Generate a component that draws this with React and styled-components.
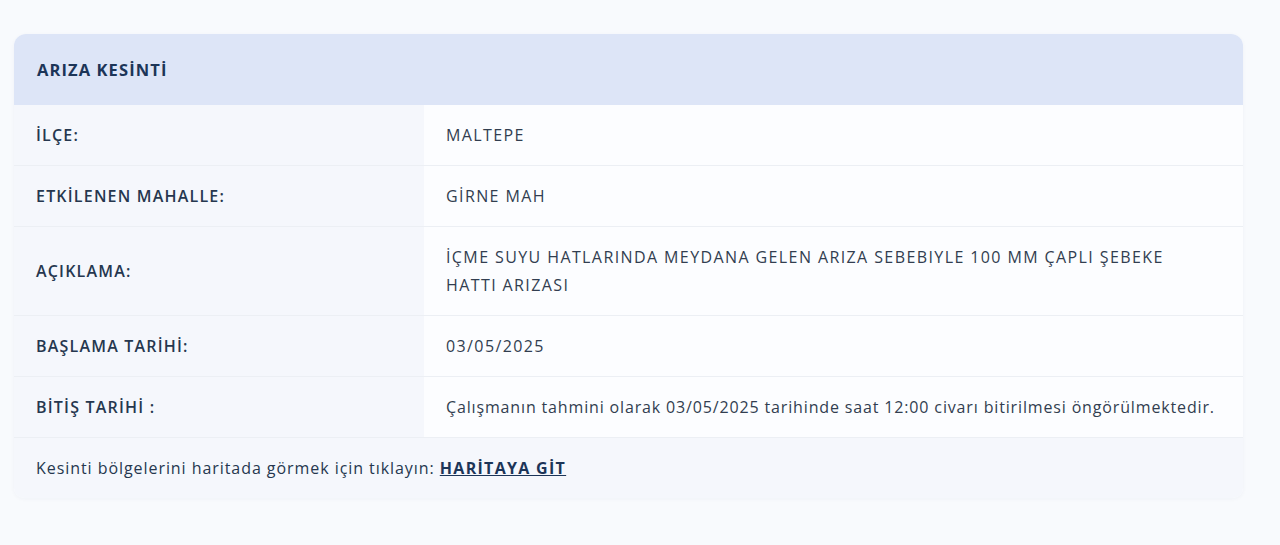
import React from "react";
import styled, { createGlobalStyle } from "styled-components";

const GlobalStyle = createGlobalStyle`
    body {
        margin: 0;
        background: #f8fafd;
        font-family: "Open Sans", Lato, sans-serif;
    }
`;

const rows = [
    { label: "İLÇE:", value: "MALTEPE" },
    { label: "ETKİLENEN MAHALLE:", value: "GİRNE MAH" },
    { label: "AÇIKLAMA:", value: "İÇME SUYU HATLARINDA MEYDANA GELEN ARIZA SEBEBIYLE 100 MM ÇAPLI ŞEBEKE\nHATTI ARIZASI" },
    { label: "BAŞLAMA TARİHİ:", value: "03/05/2025" },
    { label: "BİTİŞ TARİHİ :", value: "Çalışmanın tahmini olarak 03/05/2025 tarihinde saat 12:00 civarı bitirilmesi öngörülmektedir.", sentence: true },
];

export default function App() {
    return (
        <>
            <GlobalStyle />
            <Page>
                <Card>
                    <Header>ARIZA KESİNTİ</Header>
                    {rows.map(row => (
                        <Row key={row.label}>
                            <Label>{row.label}</Label>
                            <Value $sentence={row.sentence}>{row.value}</Value>
                        </Row>
                    ))}
                    <Footer>
                        Kesinti bölgelerini haritada görmek için tıklayın: <MapLink href="#">HARİTAYA GİT</MapLink>
                    </Footer>
                </Card>
            </Page>
        </>
    );
}

const Page = styled.div`
    padding: 34px 37px 40px 14px;
`;

const Card = styled.div`
    background: #fcfdff;
    border-radius: 12px 12px 10px 10px;
    overflow: hidden;
    box-shadow: 0 1px 4px rgba(30, 50, 90, 0.04);
`;

const Header = styled.div`
    background: #dde5f7;
    height: 71px;
    display: flex;
    align-items: center;
    padding: 0 23px;
    color: #1c3558;
    font-size: 16.5px;
    font-weight: 700;
    letter-spacing: 1.1px;
`;

const Row = styled.div`
    display: grid;
    grid-template-columns: 410px 1fr;
    border-bottom: 1px solid #eceff4;
    font-size: 16px;
    line-height: 28px;
`;

const Label = styled.div`
    background: #f5f7fc;
    padding: 16px 22px;
    display: flex;
    align-items: center;
    color: #26374f;
    font-weight: 600;
    letter-spacing: 1.2px;
`;

const Value = styled.div`
    padding: 16px 22px;
    color: #323e50;
    white-space: pre-line;
    letter-spacing: ${p => (p.$sentence ? "0.85px" : "1.4px")};
`;

const Footer = styled.div`
    background: #f5f7fc;
    padding: 16px 22px;
    line-height: 28px;
    font-size: 16px;
    letter-spacing: 0.94px;
    color: #26374f;
`;

const MapLink = styled.a`
    color: #1c3558;
    font-weight: 700;
    letter-spacing: 1.3px;
    text-decoration: underline;
`;
